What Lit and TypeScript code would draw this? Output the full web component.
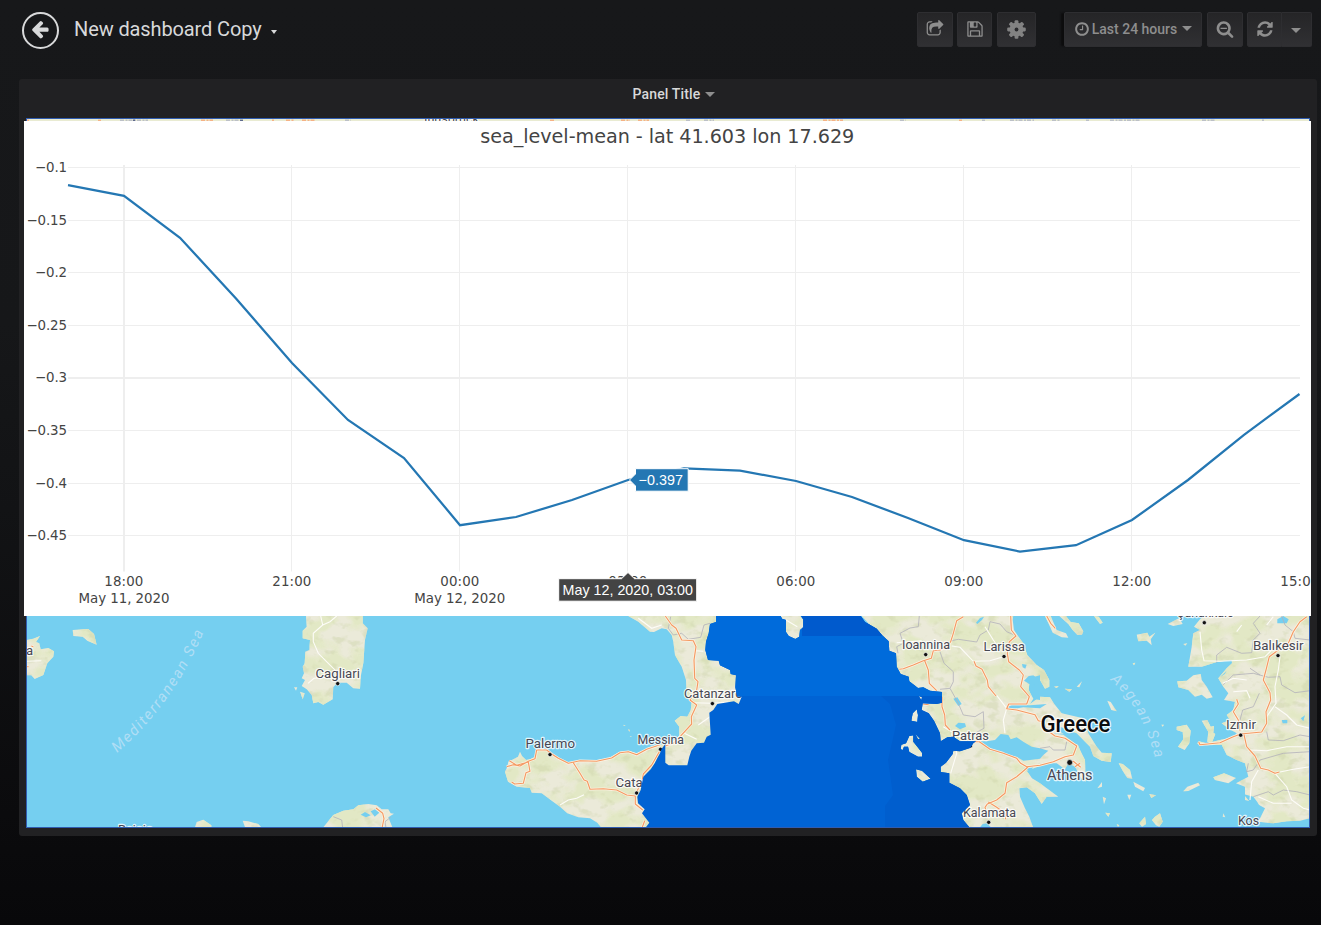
import { LitElement, html, svg, css } from "lit";
import { customElement } from "lit/decorators.js";

/* Map geometry is stored per tile, in thirds of a pixel from the tile's corner. */
const TILES: Record<string, [number, number]> = {
  a: [0, 600],
  b: [480, 600],
  c: [740, 600],
  d: [1020, 600],
};
const pts = (tile: string, s: string) =>
  s
    .trim()
    .split(/\s+/)
    .map((p) => {
      const [x, y] = p.split(",").map(Number);
      return `${(TILES[tile][0] + x / 3).toFixed(1)},${(TILES[tile][1] + y / 3).toFixed(1)}`;
    })
    .join(" ");
const poly = (tile: string, s: string) => "M" + pts(tile, s) + "Z";
const line = (tile: string, s: string) => "M" + pts(tile, s);

const WEST =
  "708,48 708,66 690,72 686,100 678,125 676,150 684,180 716,182 720,196 750,210 752,222 768,226 766,262 772,290 785,290 776,312 762,304 712,312 700,330 688,338 692,404 680,410 672,428 650,430 634,452 628,470 622,496 566,496 556,488 556,432 545,446 540,460 534,470 524,490 512,508 490,530 484,560 482,570 472,590 474,610 494,628 486,640 508,668 496,684";
const EAST =
  "690,684 670,660 665,640 690,615 680,585 660,565 628,548 628,520 602,516 602,500 618,488 638,462 640,452 660,454 690,444 700,430 708,424 660,424 640,410 622,412 602,424 600,400 582,362 566,340 545,330 548,310 590,312 606,308 606,276 570,272 550,262 534,264 508,244 506,230 482,222 470,200 468,160 448,152 446,124 425,104 410,86 375,66 362,48";
const IONIAN_ISLES = [
  "122,48 126,56 138,60 138,96 146,108 166,117 178,110 180,90 190,82 190,58 182,48",
  "514,362 518,340 530,328 534,345 532,366",
  "482,448 484,434 498,430 508,408 520,406 520,425 532,440 546,458 546,470 534,470 508,456 504,440 492,440 488,450",
  "528,508 546,512 572,536 548,545 530,530",
  "526,402 540,416 534,418",
  "536,288 546,292 544,300",
];
const LAND = [
  poly("a", "80,120 100,116 120,108 108,126 118,130 122,148 145,144 162,154 160,170 142,190 130,225 104,237 94,226 80,226"),
  poly("a", "218,90 265,87 282,102 290,134 262,122 248,110 220,108"),
  poly("a", "918,48 920,80 908,92 908,115 930,120 928,150 916,155 914,190 908,200 912,220 905,235 915,240 905,258 920,268 935,285 940,310 955,306 970,314 998,298 1000,262 1012,248 1040,248 1060,265 1080,266 1082,230 1090,190 1095,120 1103,85 1088,70 1088,48"),
  poly("a", "882,262 892,262 888,272"),
  poly("a", "900,275 914,280 908,298"),
  poly("a", "584,684 590,666 610,659 634,676 634,684"),
  poly("a", "736,684 728,662 745,664 775,672 786,684"),
  poly("a", "968,684 1000,645 1030,632 1060,628 1075,616 1105,612 1130,616 1145,628 1165,628 1172,640 1182,641 1165,652 1178,684"),
  poly("b", "78,525 75,515 82,500 85,485 100,478 114,470 120,455 126,468 138,480 150,478 165,470 172,450 200,450 215,466 232,472 262,490 300,482 340,482 385,475 418,456 450,454 470,460 510,442 560,430 560,500 540,684 365,684 352,668 330,655 295,652 262,640 240,620 215,602 185,580 155,578 150,564 110,560 84,545"),
  poly("b", "445,48 475,65 510,95 522,96 545,85 560,88 575,105 580,125 585,165 605,200 618,240 620,290 635,305 632,330 622,350 602,348 584,362 598,380 598,410 575,425 553,436 552,500 640,500 710,420 712,330 790,320 795,290 785,190 700,170 690,150 715,48"),
  poly("c", "362,44 820,44 818,60 822,90 832,105 850,130 862,165 890,195 912,210 928,240 928,260 915,266 900,240 880,226 866,228 852,242 868,252 866,270 880,296 870,312 900,290 930,292 943,312 965,340 1030,355 1045,400 1070,440 1085,458 1115,460 1112,486 1085,482 1060,468 1050,440 1010,400 960,380 960,395 1010,425 1020,450 1035,480 1037,545 1024,535 1005,500 985,490 975,508 950,490 920,490 900,498 860,512 876,535 900,550 955,590 920,590 905,612 885,580 860,562 838,565 840,590 855,625 868,650 880,684 640,684 600,500 540,320 450,240 430,120"),
  poly("d", "560,44 540,58 522,80 540,90 520,100 515,140 505,200 545,200 590,186 635,180 636,190 620,205 595,235 610,260 625,280 612,300 645,305 640,330 620,345 630,360 605,370 625,385 650,400 640,412 600,420 560,430 536,424 532,432 560,436 605,434 620,465 650,480 675,490 685,530 648,550 675,560 675,600 700,605 735,625 715,665 760,670 800,664 840,662 870,655 870,44"),
  poly("d", "472,244 500,242 520,226 542,222 545,240 560,260 578,292 560,296 545,284 525,290 505,270 475,262"),
  poly("d", "470,380 500,374 512,392 508,430 494,450 474,440 490,418 488,396 470,390"),
  poly("d", "545,362 562,360 572,380 582,378 580,398 586,402 575,430 562,425 565,395"),
  poly("d", "350,104 382,98 388,110 406,98 392,118 395,136 380,122 355,124"),
  poly("d", "75,48 90,80 98,98 125,112 145,113 138,100 110,90 92,48"),
  poly("d", "118,48 145,72 158,90 172,105 186,104 190,94 176,70 152,66 138,48"),
  poly("d", "222,48 240,72 248,68 236,50"),
  poly("d", "443,72 478,54 488,72 460,78"),
  poly("d", "262,302 272,306 290,334 274,330"),
  poly("d", "296,490 308,492 330,510 337,536 322,534 308,512"),
  poly("d", "340,545 375,564 370,574 345,560"),
  poly("d", "490,574 502,560 535,548 540,556 505,573"),
  poly("d", "580,532 612,520 648,534 625,550 585,540"),
  poly("d", "358,670 375,650 378,672 366,680"),
  poly("d", "396,660 405,650 420,640 428,665 418,680 408,676"),
  poly("d", "232,565 246,546 246,560"),
  poly("d", "248,590 258,595 252,613"),
  poly("d", "322,584 334,584 328,600"),
  poly("d", "388,582 408,586 394,594"),
  poly("d", "134,266 156,268 148,275"),
  poly("d", "170,260 186,244 178,262"),
  poly("d", "338,190 346,188 342,196"),
  poly("d", "256,638 270,640 265,650"),
  poly("d", "610,640 616,652 608,650"),
  poly("d", "102,260 116,258 110,264"),
  poly("d", "490,132 502,130 496,137"),
  poly("d", "424,374 432,374 428,380"),
  poly("d", "290,672 298,676 294,680"),
  ...["430,374 437,378 432,378", "444,388 450,390 448,395", "449,408 455,408 453,410"].map((s) => poly("b", s)),
  ...IONIAN_ISLES.map((s) => poly("c", s)),
];

const WATER = [
  poly("c", "712,424 740,424 765,420 782,402 805,405 812,418 830,412 850,425 875,440 900,445 925,452 910,465 900,476 870,480 850,482 830,470 795,462 760,455 735,440"),
  poly("c", "645,378 655,368 675,370 678,380 660,388"),
  poly("c", "708,68 720,54 732,50 726,60 712,72"),
  poly("c", "800,322 815,316 870,316 920,312 900,325 850,322 810,328"),
  poly("c", "640,296 652,292 665,312 655,318"),
  poly("c", "846,192 860,194 856,206 848,202"),
  poly("c", "862,236 900,226 900,300 885,298 868,268 885,255 864,250"),
  poly("c", "850,505 880,502 872,512"),
  poly("c", "718,684 728,672 740,670 755,684"),
  poly("d", "95,400 150,402 190,440 168,432 130,404"),
  poly("d", "772,58 790,48 806,58 800,70 772,70"),
  poly("d", "785,360 802,360 802,370 788,370"),
  poly("d", "842,355 855,346 850,364"),
  poly("a", "1082,644 1095,636 1112,646 1098,652"),
  poly("a", "1112,634 1125,628 1138,638 1124,650"),
  poly("d", "670,582 700,590 712,606 722,625 690,606"),
  poly("d", "620,212 600,232 614,222"),
].join("");

const ROADS = [
  line("b", "80,500 100,494 120,498 145,484 165,476 170,450 200,450 215,462 235,475 265,490 300,482 350,484 395,474 420,458 445,455 470,464 500,448 540,434"),
  line("b", "88,482 110,496 145,486 150,514 138,518 130,550 104,552 95,546"),
  line("b", "280,488 300,520 312,540 322,544 330,568 370,566 410,570 440,585 466,588 466,612 488,630"),
  line("b", "470,575 486,545 490,522 515,495 538,455"),
  line("b", "556,48 575,75 588,85 605,120 640,122 648,140 642,180 644,235 654,245 650,270 630,300 650,315 634,350 635,372 600,410 580,430 556,438"),
  line("b", "494,662 486,684"),
  line("c", "670,50 650,62 640,100 632,125 620,140 600,150 580,152 574,175 550,182 520,195 490,206 478,208"),
  line("c", "554,182 565,210 568,250 590,272"),
  line("c", "606,290 606,320 614,345 616,375 630,390"),
  line("c", "812,48 814,90 828,108 808,125 802,160 806,185 838,210 850,225 842,260 868,290 860,312 806,312 800,326 830,330 885,344 895,362 912,366 920,390 945,408 975,415 1010,438 1000,465 975,470 940,485 900,496 860,500 842,490 830,475 790,460 750,448 718,425 700,425 690,445"),
  line("c", "865,500 830,530 800,548 795,580 770,600 742,612 735,622 740,640"),
  line("c", "745,606 770,622 795,640 797,658"),
  line("c", "702,184 708,198 726,208 742,240 745,260 768,288"),
  line("c", "548,312 566,314"),
  line("d", "80,48 92,70 106,85"),
  line("d", "150,488 160,484 182,502"),
  line("d", "165,500 180,490"),
  line("d", "536,426 540,434 600,428 640,410 662,402 725,396 740,370 738,335 752,300 750,278 730,240 738,210 748,170 775,150 805,130 820,95 840,65 860,50"),
  line("d", "672,404 680,440 705,468 722,505 745,510 765,520 778,516"),
  line("d", "660,392 655,360 640,335 655,312 650,298"),
  line("a", "1128,624 1148,640 1152,656 1146,684"),
  line("a", "80,200 86,200"),
  line("a", "94,138 100,140"),
].join("");

const MINOR = [
  line("a", "962,48 968,75 940,100 940,125 955,160 985,190 1010,215 1018,240"),
  line("a", "968,75 990,65 1010,48"),
  line("a", "80,184 124,182"),
  line("a", "924,250 942,235 980,232"),
  line("b", "240,615 265,600 290,595 312,584"),
  line("b", "475,55 515,85 545,75"),
  line("b", "640,308 695,310 745,306"),
  line("b", "610,398 650,418"),
  line("b", "655,375 690,350"),
  line("b", "645,152 670,154"),
  line("c", "635,138 660,142 700,184 750,182 790,170"),
  line("c", "735,80 760,120 780,150"),
  line("c", "770,286 800,325 790,360 795,400"),
  line("c", "635,400 650,460 632,520"),
  line("c", "470,128 545,122"),
  line("c", "610,380 660,410 700,415"),
  line("c", "138,60 172,80"),
  line("d", "540,95 545,150 552,182 600,184 680,180 735,170 765,140"),
  line("d", "780,170 775,210 765,260 768,310 740,350"),
  line("d", "765,320 800,345 830,375 870,385"),
  line("d", "690,450 740,452 800,440 870,440"),
  line("d", "690,600 695,545 715,510"),
  line("d", "765,520 800,560 815,600 850,625 870,630"),
  line("d", "715,590 760,610 815,610"),
  line("d", "870,500 820,508 780,516"),
  line("d", "608,250 640,235 680,240"),
  line("d", "640,275 680,272 690,295"),
  line("d", "740,75 760,50"),
  line("d", "650,95 665,75"),
].join("");

const BORDERS = [
  line("b", "572,50 565,85 580,105 605,100 625,118 662,112 672,75 690,70"),
  line("c", "538,48 535,80 510,84 480,100 490,130 470,140 474,160"),
  line("c", "635,122 655,118 710,126 720,105 745,90 750,65 780,72 800,95 830,108"),
  line("c", "600,155 612,190 640,215 640,245 630,265 600,268"),
  line("c", "630,265 655,310 670,345 705,350 730,335 732,385 705,400"),
  line("d", "590,188 590,165 620,142 665,160 695,158 700,120 720,100 700,70 720,48"),
  line("d", "608,255 640,225 700,220 745,232 780,230 785,255 825,278 870,272"),
  line("d", "785,48 795,75 820,95 825,115 870,120"),
  line("d", "690,205 720,225"),
  line("d", "660,360 668,330 700,320 718,280"),
  line("d", "740,395 745,420 790,422 840,405 870,410"),
  line("d", "685,490 680,515 700,510 720,480 790,460 870,455"),
  line("d", "700,590 745,575 760,585 790,570 830,575 870,585"),
  line("d", "60,445 90,440 100,450 135,450 140,425"),
  line("a", "1000,650 1025,660 1028,684"),
  line("a", "1172,652 1155,665 1158,684"),
].join("");

type Place = [string, number, number, number, number?, number?];
/* name, left, baseline, width, dot x, dot y */
const PLACES: Place[] = [
  ["Cagliari", 315.5, 678, 44.5, 337.7, 683.6],
  ["Palermo", 525.5, 748, 49.5, 550, 754.6],
  ["Messina", 637.5, 743.5, 46.5, 660.5, 749.3],
  ["Catania", 615.5, 786.5, 45, 636.6, 793],
  ["Catanzaro", 684, 698, 58.5, 712.4, 703.6],
  ["Ioannina", 902, 649, 48, 925.7, 654.6],
  ["Larissa", 983.5, 651, 41.5, 1004, 656.5],
  ["Patras", 952, 740, 37, 970.5, 746],
  ["Kalamata", 963, 816.5, 53, 988.7, 822.3],
  ["Izmir", 1226, 728.8, 30, 1240.7, 735.2],
  ["Balıkesir", 1253, 650, 50.5, 1278, 655.6],
  ["Kos", 1238, 825, 21],
  ["Çanakkale", 1176.5, 617.2, 57, 1204.3, 622.7],
  ["Bejaia", 118, 834, 35],
  ["Palma", -4, 655, 37],
  ["Innsbruck", 424, 123, 55],
];

const ICON = {
  back: "M1664 896v128q0 53-32.500 90.500t-84.500 37.500h-704l293 294q38 36 38 90t-38 90l-75 76q-37 37-90 37-52 0-91-37l-651-652q-37-37-37-90 0-52 37-91l651-650q38-38 91-38 52 0 90 38l75 74q38 38 38 91t-38 91l-293 293h704q52 0 84.500 37.500t32.500 90.500z",
  share: "M1472 989v259q0 119-84.500 203.500t-203.500 84.500h-832q-119 0-203.500-84.500t-84.500-203.500v-832q0-119 84.500-203.500t203.500-84.500h255q13 0 22.500 9.500t9.500 22.500q0 27-26 32-77 26-133 60-10 4-16 4h-112q-66 0-113 47t-47 113v832q0 66 47 113t113 47h832q66 0 113-47t47-113v-214q0-19 18-29 28-13 54-37 16-16 35-8 21 9 21 29zm237-496l-384 384q-18 19-45 19-12 0-25-5-39-17-39-59v-192h-160q-323 0-438 131-119 137-74 473 3 23-20 34-8 2-12 2-16 0-26-13-10-14-21-31t-39.500-68.500-49.500-99.500-38.500-114-17.500-122q0-49 3.500-91t14-90 28-88 47-81.500 68.500-74 94.500-61.500 124.500-48.500 159.500-30.500 196.500-11h160v-192q0-42 39-59 13-5 25-5 26 0 45 19l384 384q19 19 19 45t-19 45z",
  save: "M512 1536h768v-384h-768v384zm896 0h128v-896q0-14-10-38.500t-20-34.500l-281-281q-10-10-34-20t-39-10v416q0 40-28 68t-68 28h-576q-40 0-68-28t-28-68v-416h-128v1280h128v-416q0-40 28-68t68-28h832q40 0 68 28t28 68v416zm-384-928v-320q0-13-9.500-22.500t-22.500-9.500h-192q-13 0-22.500 9.500t-9.500 22.500v320q0 13 9.500 22.500t22.500 9.500h192q13 0 22.500-9.500t9.500-22.500zm640 32v928q0 40-28 68t-68 28h-1344q-40 0-68-28t-28-68v-1344q0-40 28-68t68-28h928q40 0 88 20t76 48l280 280q28 28 48 76t20 88z",
  clock: "M1024 544v448q0 14-9 23t-23 9h-320q-14 0-23-9t-9-23v-64q0-14 9-23t23-9h224v-352q0-14 9-23t23-9h64q14 0 23 9t9 23zm416 352q0-148-73-273t-198-198-273-73-273 73-198 198-73 273 73 273 198 198 273 73 273-73 198-198 73-273zm224 0q0 209-103 385.500t-279.500 279.500-385.500 103-385.500-103-279.500-279.500-103-385.500 103-385.500 279.500-279.500 385.500-103 385.500 103 279.500 279.500 103 385.500z",
  zoomOut: "M1088 800v64q0 13-9.500 22.500t-22.500 9.500h-576q-13 0-22.500-9.500t-9.500-22.500v-64q0-13 9.500-22.500t22.500-9.500h576q13 0 22.500 9.500t9.500 22.500zm128 32q0-185-131.500-316.500t-316.500-131.500-316.500 131.500-131.500 316.500 131.500 316.500 316.500 131.500 316.500-131.500 131.500-316.500zm512 832q0 53-37.500 90.500t-90.500 37.500q-54 0-90-38l-343-342q-179 124-399 124-143 0-273.500-55.500t-225-150-150-225-55.500-273.500 55.500-273.500 150-225 225-150 273.500-55.500 273.500 55.500 225 150 150 225 55.500 273.500q0 220-124 399l343 343q37 37 37 90z",
  refresh: "M1639 1056q0 5-1 7-64 268-268 434.500t-478 166.500q-146 0-282.500-55t-243.500-157l-129 129q-19 19-45 19t-45-19-19-45v-448q0-26 19-45t45-19h448q26 0 45 19t19 45-19 45l-137 137q71 66 161 102t187 36q134 0 250-65t186-179q11-17 53-117 8-23 30-23h192q13 0 22.500 9.500t9.500 22.500zm25-800v448q0 26-19 45t-45 19h-448q-26 0-45-19t-19-45 19-45l138-138q-148-137-349-137-134 0-250 65t-186 179q-11 17-53 117-8 23-30 23h-199q-13 0-22.500-9.500t-9.500-22.500v-7q65-268 270-434.500t480-166.500q146 0 284 55.500t245 156.500l130-129q19-19 45-19t45 19 19 45z",
};
const icon = (d: string, size: number) =>
  html`<svg width=${size} height=${size} viewBox="0 0 1792 1792"><path fill="currentColor" d=${d} /></svg>`;
const gear = () => html`<svg width="19" height="19" viewBox="-9.500 -9.500 19 19">
  ${[0, 45, 90, 135].map((a) => svg`<rect x="-1.900" y="-9.300" width="3.800" height="18.600" rx="1.100" fill="currentColor" transform="rotate(${a})" />`)}
  <circle r="6.900" fill="currentColor" />
  <circle r="1.900" fill="#2a2a2d" />
</svg>`;

/* Fragments of the map that peek out above the popup: left, width, colour index. */
const STRIP: [number, number, number][] = [
  [27, 2, 0], [98, 3, 0], [120, 28, 1], [133, 2, 2], [201, 12, 0], [226, 14, 1], [240, 3, 2], [272, 2, 0],
  [286, 8, 0], [302, 14, 0], [345, 6, 1], [550, 4, 0], [621, 9, 0], [638, 11, 0], [686, 4, 1], [704, 10, 1],
  [823, 20, 0], [900, 6, 1], [959, 3, 0], [982, 3, 1], [1010, 24, 1], [1052, 8, 1], [1086, 3, 1], [1110, 30, 1],
  [1202, 14, 1], [1262, 2, 1],
];

@customElement("sea-map")
export class SeaMap extends LitElement {
  static styles = css`
    :host { display: block; width: 1284px; height: 710px; }
    svg { display: block; }
    text { font-family: Roboto, "Noto Sans", sans-serif; }
    .place { font-size: 13px; fill: #484853; stroke: rgba(255, 255, 255, 0.8); stroke-width: 2.4px; stroke-linejoin: round; paint-order: stroke; }
    .capital { font-size: 14.5px; }
    .country { font-size: 23px; font-weight: 500; fill: #0c0c0e; stroke: rgba(255, 255, 255, 0.85); stroke-width: 2.5px; stroke-linejoin: round; paint-order: stroke; }
    .sea { font-size: 15px; font-style: italic; fill: #b0def5; }
  `;
  render() {
    const ocean =
      "M" + pts("b", WEST) + " " + pts("c", EAST) + "Z" + IONIAN_ISLES.map((s) => poly("c", s)).join("");
    return html`<svg width="1284" height="710" viewBox="26 118 1284 710">
      <defs>
        <clipPath id="land">${LAND.map((d) => svg`<path d=${d} />`)}</clipPath>
        <clipPath id="ocean"><path clip-rule="evenodd" d=${ocean} /></clipPath>
        <filter id="relief" x="0" y="0" width="100%" height="100%" color-interpolation-filters="sRGB">
          <feTurbulence type="fractalNoise" baseFrequency="0.03 0.04" numOctaves="3" seed="8" />
          <feColorMatrix values="0 0 0 0 .885  0 0 0 0 .910  0 0 0 0 .765  6 0 0 0 -2.550" />
        </filter>
        <filter id="shade" x="0" y="0" width="100%" height="100%" color-interpolation-filters="sRGB">
          <feTurbulence type="fractalNoise" baseFrequency="0.08 0.11" numOctaves="3" seed="21" />
          <feColorMatrix values="0 0 0 0 .81  0 0 0 0 .835  0 0 0 0 .68  5 0 0 0 -2.700" />
        </filter>
        <path id="med" d="M117 753 Q176 702 206 626" />
        <path id="aeg" d="M1110 680 Q1146 710 1157 768" />
      </defs>
      <rect x="26" y="118" width="1284" height="710" fill="#75cff0" />
      ${LAND.map((d) => svg`<path d=${d} fill="#ebead9" />`)}
      <g clip-path="url(#land)">
        <rect x="26" y="612" width="1284" height="216" filter="url(#relief)" opacity=".9" />
        <rect x="26" y="612" width="1284" height="216" filter="url(#shade)" opacity=".5" />
      </g>
      <path d=${WATER} fill="#75cff0" />
      <path d=${BORDERS} fill="none" stroke="#b3b1ba" stroke-width=".8" />
      <path d=${MINOR} fill="none" stroke="#fdfcf8" stroke-width="1.100" />
      <path d=${ROADS} fill="none" stroke="#fdf3e4" stroke-width="2.500" stroke-linejoin="round" />
      <path d=${ROADS} fill="none" stroke="#f49a63" stroke-width="1.150" stroke-linejoin="round" />
      <rect x="26" y="118" width="1284" height="4" fill="#e9ebd2" />
      ${STRIP.map(
        ([x, w, c]) =>
          svg`<path d="M${x} 120.300H${x + w}" stroke=${["#f5b285", "#bcc0c6", "#5f6a8c"][c]} stroke-width="1.400" stroke-dasharray=${w > 5 ? "4 1.500 2 1" : "none"} />`,
      )}
      <text class="sea"><textPath href="#med" textLength="150">Mediterranean Sea</textPath></text>
      <text class="sea"><textPath href="#aeg" textLength="92">Aegean Sea</textPath></text>
      ${PLACES.map(
        ([name, x, y, w, dx, dy]) => svg`
          <text class="place" x=${x} y=${y} textLength=${w} lengthAdjust="spacingAndGlyphs">${name}</text>
          ${dx ? svg`<circle cx=${dx} cy=${dy} r="2.100" fill="#111" stroke="#fff" stroke-opacity=".6" stroke-width="1" />` : ""}`,
      )}
      <text class="place capital" x="1047" y="779.500" textLength="45.500" lengthAdjust="spacingAndGlyphs">Athens</text>
      <circle cx="1069.700" cy="762.500" r="2.900" fill="#111" stroke="#fff" stroke-opacity=".6" />
      <text class="country" x="1040.500" y="731.800" textLength="70" lengthAdjust="spacingAndGlyphs">Greece</text>
      <g clip-path="url(#ocean)">
        <rect x="630" y="616" width="440" height="212" fill="#0063d4" />
        <rect x="690" y="616" width="380" height="80" fill="#006bdb" />
        <rect x="802" y="616" width="80" height="20" fill="#005acd" />
        <path d="M881 696 L890 704 L896 725 L888 760 L893 795 L885 806 V828 H1070 V696Z" fill="#005ece" />
      </g>
      <rect x="26.500" y="118.500" width="1283" height="709" fill="none" stroke="#2f5cb0" />
    </svg>`;
  }
}

const SERIES: [number, number][] = [
  185.2, 195.8, 237.8, 298.5, 363, 420, 458, 525.2, 517, 500, 480, 468.3, 470.6, 481, 497, 518, 540.2, 551.6, 545.2, 520, 480, 434.8, 394,
].map((y, i) => [Math.min(68 + 56 * i, 1299.5), y]);

@customElement("level-chart")
export class LevelChart extends LitElement {
  static styles = css`
    :host { display: block; background: #fff; }
    svg { display: block; }
    text { font-family: "DejaVu Sans", Verdana, sans-serif; font-size: 13.4px; fill: #444; }
    .title { font-size: 19.2px; }
    .tip { font-family: "Liberation Sans", Arial, sans-serif; font-size: 14.3px; fill: #fff; }
  `;
  render() {
    const ys = ["−0.1", "−0.15", "−0.2", "−0.25", "−0.3", "−0.35", "−0.4", "−0.45"];
    const xs = ["18:00", "21:00", "00:00", "03:00", "06:00", "09:00", "12:00", "15:00"];
    const rows = [167.5, 220.5, 272.5, 325.5, 378, 430.5, 483.5, 535.5];
    return html`<svg width="1287" height="495" viewBox="24 121 1287 495">
      ${xs.slice(0, 7).map((_, i) => {
        const x = i === 0 ? 124 : 123.5 + 168 * i;
        return svg`<path d="M${x} 165V571.500" stroke="#eee" stroke-width=${i === 0 ? 2 : 1} />`;
      })}
      ${rows.map(
        (y, i) => svg`<path d="M68 ${y}H1300" stroke="#eee" stroke-width=${i === 4 ? 2 : 1} />
          <text x="67" y=${y + 4.2} text-anchor="end" textLength=${ys[i].length === 5 ? 40.5 : 32}>${ys[i]}</text>`,
      )}
      ${xs.map((t, i) => svg`<text x=${123.8 + 168 * i} y="585.700" text-anchor="middle" textLength="39">${t}</text>`)}
      <text x="124" y="602.700" text-anchor="middle" textLength="91">May 11, 2020</text>
      <text x="459.800" y="602.700" text-anchor="middle" textLength="91">May 12, 2020</text>
      <text class="title" x="667.300" y="143" text-anchor="middle" textLength="374">sea_level-mean - lat 41.603 lon 17.629</text>
      <polyline points=${SERIES.map((p) => p.join(",")).join(" ")} fill="none" stroke="#2477b3" stroke-width="2.250" />
      <path d="M629.500 480L635.500 474V468.700H688.200V491.200H635.500V486Z" fill="#2477b3" stroke="#fff" />
      <text class="tip" x="638.500" y="485" textLength="44.500">−0.397</text>
      <path d="M628 572.500L634.500 578.700H696.700V601.200H558.700V578.700H621.500Z" fill="#444" stroke="#fff" />
      <text class="tip" x="562.500" y="595" textLength="130.500">May 12, 2020, 03:00</text>
    </svg>`;
  }
}

@customElement("app-root")
export class AppRoot extends LitElement {
  static styles = css`
    :host {
      display: flex;
      flex-direction: column;
      box-sizing: border-box;
      height: 925px;
      overflow: hidden;
      padding-left: 19px;
      background: linear-gradient(180deg, #17181a 0, #161719 35%, #121315 55%, #0b0b0d 88%, #08080a 100%);
      font-family: Roboto, sans-serif;
      color: #d8d9da;
    }
    .bar { display: flex; align-items: center; height: 35px; padding: 12px 9px 0 3px; }
    .back { box-sizing: border-box; display: grid; place-items: center; width: 37px; height: 37px; padding: 0 1px 2px 0; border: 2px solid #d8d9da; border-radius: 50%; margin-top: 1px; }
    .name { margin: 0 0 0 15px; font-size: 20px; font-weight: 400; letter-spacing: -0.12px; line-height: 35px; white-space: nowrap; }
    .caret { width: 0; height: 0; border: 4px solid transparent; border-top-color: currentColor; border-bottom: 0; }
    .name-caret { margin: 5px auto 0 9px; border-width: 4px 3.5px 0; }
    .btn { box-sizing: border-box; display: flex; align-items: center; justify-content: center; height: 35px; padding-bottom: 2px; border: 1px solid #2e2e31; border-radius: 2px; background: linear-gradient(180deg, #252527, #303033); color: #8e8e8e; font-size: 14px; font-weight: 500; white-space: nowrap; }
    .share { width: 36px; margin-right: 4px; }
    .save { width: 35px; margin-right: 5px; }
    .gear { width: 39px; margin-right: 28px; padding-bottom: 0; color: #828282; }
    .range { width: 138px; margin-right: 5px; gap: 2px; box-shadow: -4px 0 2px -1px #0c0c0d; }
    .range .caret { border-width: 5px 5px 0; margin-left: 3px; margin-top: -1px; }
    .zoom { width: 36px; margin-right: 4px; }
    .refresh { width: 35px; border-radius: 2px 0 0 2px; }
    .more { width: 30px; border-left: 0; border-radius: 0 2px 2px 0; padding-right: 1px; }
    .more .caret { border-width: 5px 5px 0; margin-top: 3px; }
    .panel { box-sizing: border-box; width: 1298px; height: 757px; margin-top: 32px; border-radius: 3px; background: #212123; }
    .head { display: flex; align-items: center; justify-content: center; gap: 5px; height: 39px; padding-left: 12px; font-size: 14px; font-weight: 500; line-height: 30px; }
    .head span { margin-top: -9px; letter-spacing: 0.15px; }
    .head .caret { margin-top: -9px; color: #8e8e8e; border-width: 5px 5px 0; }
    .body { position: relative; margin-left: 7px; width: 1284px; }
    .popup { position: absolute; left: -2px; top: 3px; }
  `;
  render() {
    return html`
      <header class="bar">
        <div class="back">${icon(ICON.back, 20)}</div>
        <h1 class="name">New dashboard Copy</h1>
        <i class="caret name-caret"></i>
        <div class="btn share">${icon(ICON.share, 18)}</div>
        <div class="btn save">${icon(ICON.save, 18)}</div>
        <div class="btn gear">${gear()}</div>
        <div class="btn range">${icon(ICON.clock, 16)}<span>Last 24 hours</span><i class="caret"></i></div>
        <div class="btn zoom">${icon(ICON.zoomOut, 18)}</div>
        <div class="btn refresh">${icon(ICON.refresh, 18)}</div>
        <div class="btn more"><i class="caret"></i></div>
      </header>
      <main class="panel">
        <div class="head"><span>Panel Title</span><i class="caret"></i></div>
        <div class="body">
          <sea-map></sea-map>
          <level-chart class="popup"></level-chart>
        </div>
      </main>
    `;
  }
}
